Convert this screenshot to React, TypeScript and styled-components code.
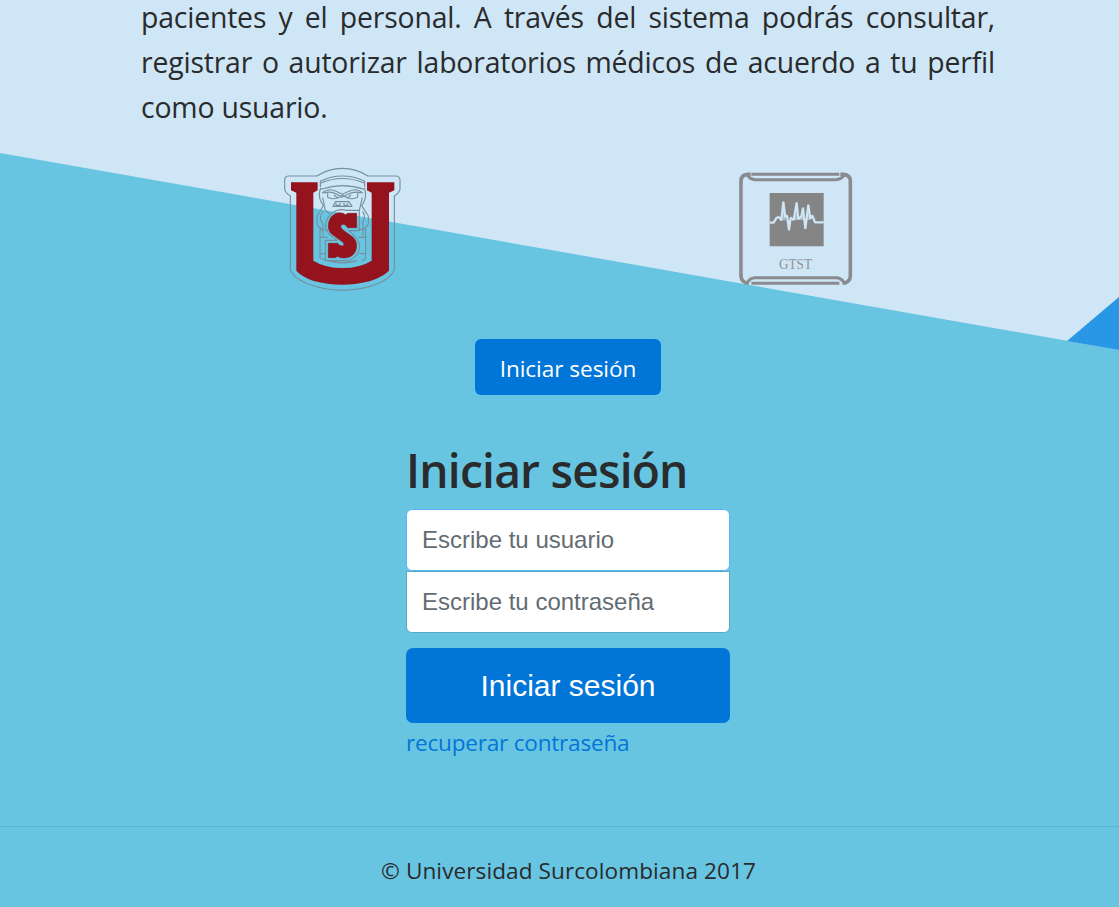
import React from 'react';
import styled, { createGlobalStyle } from 'styled-components';

const GlobalStyle = createGlobalStyle`
  * { box-sizing: border-box; }
  body {
    margin: 0;
    background: #68c5e2;
    color: #292b2c;
    font-family: "Segoe UI", "Open Sans", sans-serif;
    font-size: 22.6px;
    line-height: 36px;
  }
`;

const Page = styled.div`
  position: relative;
  height: 907px;
  overflow: hidden;
  display: flex;
  flex-direction: column;
`;

const Facet = styled.div<{ $color: string; $shape: string }>`
  position: absolute;
  inset: 0;
  background: ${(p) => p.$color};
  clip-path: polygon(${(p) => p.$shape});
`;

const Intro = styled.section`
  position: relative;
  width: 854px;
  margin: 0 auto 0 141px;
`;

const Lead = styled.p`
  margin: 0;
  font-size: 28.4px;
  line-height: 45px;
`;

const LeadLine = styled.span<{ $first?: boolean; $last?: boolean }>`
  display: block;
  white-space: nowrap;
  text-align: justify;
  text-align-last: ${(p) => (p.$last ? 'left' : 'justify')};
  letter-spacing: -0.18px;
  line-height: ${(p) => (p.$first ? '34px' : '45px')};
  height: ${(p) => (p.$first ? '40px' : '45px')};
`;

const Logos = styled.div`
  position: relative;
  display: flex;
  justify-content: space-between;
  align-items: flex-start;
  margin-top: 30px;
  padding: 0 259px 0 275px;
`;

const Art = styled.svg`
  display: block;
  flex: none;
`;

const GroupLogo = styled(Art)`
  margin-top: 5px;
`;

const StartButton = styled.button`
  position: relative;
  align-self: center;
  width: 186px;
  height: 56px;
  margin: 39px 0 0 17px;
  padding: 3px 0 0;
  border: 0;
  border-radius: 6px;
  background: #0275d8;
  color: #fff;
  font: 22.6px/36px "Segoe UI", "Open Sans", sans-serif;
  letter-spacing: -0.05px;
`;

const LoginForm = styled.form`
  position: relative;
  display: flex;
  flex-direction: column;
  width: 324px;
  margin: 50px 0 0 406px;
`;

const Title = styled.h2`
  margin: 0;
  height: 64px;
  font-size: 46.2px;
  font-weight: 600;
  line-height: 52px;
  letter-spacing: -0.8px;
  white-space: nowrap;
`;

const Field = styled.input<{ $active?: boolean }>`
  width: 324px;
  height: 62px;
  padding: 0 15px;
  border: 1px solid ${(p) => (p.$active ? '#5cb3fd' : '#57a8c0')};
  border-radius: ${(p) => (p.$active ? '6px' : '0 0 6px 6px')};
  background: #fff;
  font: 24px "Liberation Sans", Arial, sans-serif;
  outline: 0;
  &::placeholder { color: #636c72; opacity: 1; }
`;

const Submit = styled.button`
  height: 75px;
  margin-top: 15px;
  padding: 0;
  border: 0;
  border-radius: 7px;
  background: #0275d8;
  color: #fff;
  font: 30px "Liberation Sans", Arial, sans-serif;
`;

const Recover = styled.a`
  margin-top: 2px;
  color: #0275d8;
  letter-spacing: -0.23px;
  white-space: nowrap;
  text-decoration: none;
`;

const Footer = styled.footer`
  position: relative;
  margin-top: auto;
  height: 81px;
  padding: 26px 0 0 18px;
  border-top: 1px solid #5cb1cb;
  letter-spacing: 0.07px;
  text-align: center;
`;

const University = () => (
  <Art width="135" height="140" viewBox="0 0 405 420" fill="none">
    <g stroke="#74909d" strokeWidth="3.4" strokeLinejoin="round">
      <path d="M126 48H40Q29 49 29 60V88Q31 98 46 108V330Q55 352 94 370Q145 391 202 391Q260 391 312 370Q348 352 358 330V108Q373 98 375 88V60Q374 48 362 48H279Q245 25 202 25Q160 25 126 48Z" />
      <path d="M136 82V64Q168 48 202 48Q238 48 269 64V82M138 69Q202 42 267 69M138 88Q202 66 267 88" />
      <path d="M137 84Q129 103 137 123L145 137Q135 154 126 168V192Q129 203 143 207M268 84Q276 103 268 123L260 137Q271 154 280 168V192Q276 203 262 207" />
      <path d="M141 100Q160 82 183 94L202 103L222 94Q245 82 264 100M147 99Q166 92 186 103L200 112L219 103Q240 92 258 99M158 99V112Q171 119 188 114L177 105M248 99V112Q234 119 218 114L228 105M188 114L202 106L218 114" />
      <path d="M181 125H222L231 139H174ZM183 129V136H195V129M207 129V136H218V129M143 112L151 151L165 162M262 112L253 151M145 154Q128 172 143 190M263 154Q275 172 261 190" />
      <path d="M135 207V294L151 300M272 207V294L261 304M135 210H158M249 208H271M137 232H158M250 232H271M137 281H151M254 281H271M144 190V227M264 190V227M159 302Q202 315 247 302" />
      <path d="M181 153Q154 166 151 199Q153 219 187 241H151V302H220Q253 289 254 259Q254 240 222 212H253V151H214Q200 146 181 153Z" />
    </g>
    <path fill="#94131d" d="M48 67H128V91L115 98V302Q151 324 202 324Q255 324 290 302V98L276 91V67H358V91L342 98V332Q324 350 286 363Q246 374 202 374Q156 374 116 363Q80 350 64 332V98L48 91Z" />
    <path fill="#94131d" stroke="#94131d" strokeWidth="2" strokeLinejoin="round" d="M180 162Q192 156 204 160L212 165L217 160H245V203H218L212 195Q200 190 197 198Q196 204 204 210L234 232Q247 244 244 265Q240 286 220 292Q200 297 187 289L181 293H160V250H188Q192 259 203 258Q211 253 203 246L170 222Q157 210 161 188Q165 169 180 162Z" />
  </Art>
);

const Group = () => (
  <GroupLogo width="130" height="125" viewBox="0 0 390 375" fill="none">
    <g stroke="#898b8e" strokeWidth="9">
      <path d="M64 28H328M64 355H328" />
      <path d="M52 29Q59 44 76 44H318Q333 44 344 29M52 354Q59 338 76 338H318Q333 338 344 354" />
      <path strokeWidth="11" d="M62 28H53Q33 30 33 48V333Q34 353 56 355M331 28H340Q361 30 361 48V333Q360 353 338 355" />
    </g>
    <path d="M38 58V325M356 58V325" stroke="#b3bec6" strokeWidth="2" strokeDasharray="6 4" />
    <path d="M119 84H281V244H119Z" fill="#858585" />
    <path d="M119 173H131L140 158L147 156L154 166L160 110L166 157L171 151L177 196L182 158L191 165L200 112L205 162L214 154L219 128L226 192L235 119L241 161L247 151L255 172H281" stroke="#cfe6f6" strokeWidth="6.5" strokeLinejoin="bevel" />
    <path d="M154 166L160 122L167 162L177 186L184 158L192 168L200 126L207 164L219 142L226 182L235 130L243 164Z" fill="#cfe6f6" fillOpacity="0.55" />
    <text x="147" y="313" fill="#929597" fontFamily="Liberation Serif, serif" fontSize="42" textLength="99" lengthAdjust="spacingAndGlyphs">GTST</text>
  </GroupLogo>
);

export default function App() {
  return (
    <>
      <GlobalStyle />
      <Page>
        <Facet $color="#cfe6f6" $shape="0 0, 1119px 0, 1119px 350px, 0 153px" />
        <Facet $color="#2997e5" $shape="1119px 297px, 1119px 350px, 1067px 341px" />
        <Intro>
          <Lead>
            <LeadLine $first>pacientes y el personal. A través del sistema podrás consultar,</LeadLine>
            <LeadLine>registrar o autorizar laboratorios médicos de acuerdo a tu perfil</LeadLine>
            <LeadLine $last>como usuario.</LeadLine>
          </Lead>
        </Intro>
        <Logos>
          <University />
          <Group />
        </Logos>
        <StartButton>Iniciar sesión</StartButton>
        <LoginForm onSubmit={(e) => e.preventDefault()}>
          <Title>Iniciar sesión</Title>
          <Field $active placeholder="Escribe tu usuario" />
          <Field type="password" placeholder="Escribe tu contraseña" />
          <Submit>Iniciar sesión</Submit>
          <Recover>recuperar contraseña</Recover>
        </LoginForm>
        <Footer>© Universidad Surcolombiana 2017</Footer>
      </Page>
    </>
  );
}
